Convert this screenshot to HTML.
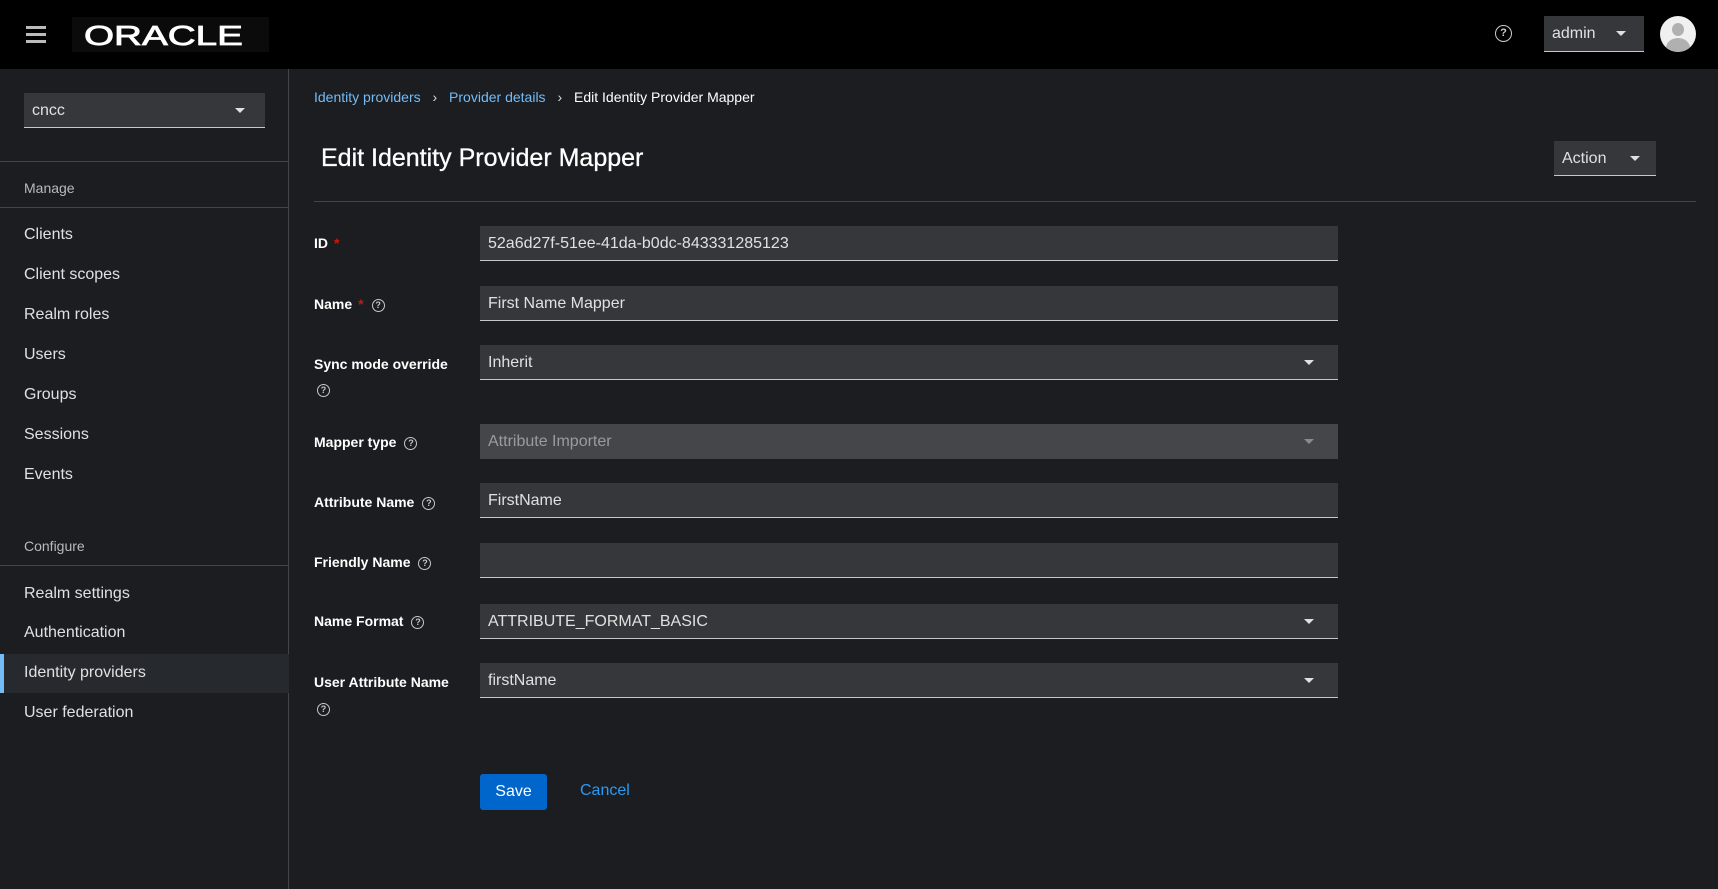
<!DOCTYPE html>
<html><head><meta charset="utf-8"><style>
*{box-sizing:border-box;margin:0;padding:0}
body{width:1718px;height:889px;overflow:hidden;background:#1b1d21;font-family:"Liberation Sans",sans-serif;color:#e0e0e0;position:relative}
.hdr{position:absolute;left:0;top:0;width:1718px;height:69px;background:#000}
.abs{position:absolute}
.side{position:absolute;left:0;top:69px;width:289px;height:820px;background:#1b1d21;border-right:1px solid #444548}
.nav{position:absolute;left:24px;font-size:16px;color:#e0e0e0}
.sec{position:absolute;left:24px;font-size:14px;color:#b8bbbe}
.hr{position:absolute;height:1px;background:#444548}
.lbl{position:absolute;left:314px;font-size:14px;font-weight:bold;color:#fff}
.req{color:#c9190b;margin-left:6px}
.inp{position:absolute;left:480px;width:858px;height:35px;background:#36373b;border-bottom:1px solid #c7c7c7;font-size:16px;color:#e0e0e0;padding:9px 8px}
.caret{position:absolute;right:24px;top:15px;width:0;height:0;border-left:5px solid transparent;border-right:5px solid transparent;border-top:5px solid #e0e0e0}
.q{display:inline-block;width:13px;height:13px;border:1.5px solid #c7c7c7;border-radius:50%;font-size:9px;line-height:10px;text-align:center;color:#c7c7c7;font-weight:bold;vertical-align:middle;margin-left:8px}
</style></head><body>
<div class="hdr">
 <div class="abs" style="left:26px;top:26px;width:20px;height:3px;background:#bbb"></div>
 <div class="abs" style="left:26px;top:33px;width:20px;height:3px;background:#bbb"></div>
 <div class="abs" style="left:26px;top:40px;width:20px;height:3px;background:#bbb"></div>
 <div class="abs" style="left:72px;top:17px;width:197px;height:35px;background:#0b0b0b"></div>
 <div class="abs" style="left:84px;top:22px;font-size:28px;font-weight:normal;color:#fff;transform:scaleX(1.38);transform-origin:left;line-height:28px;-webkit-text-stroke:0.8px #fff">ORACLE</div>
 <div class="abs" style="left:1495px;top:25px;width:17px;height:17px;border:1.5px solid #ccc;border-radius:50%;font-size:11px;line-height:14px;text-align:center;color:#ccc;font-weight:bold">?</div>
 <div class="abs" style="left:1544px;top:16px;width:100px;height:36px;background:#36373b;border-bottom:1px solid #c7c7c7;font-size:16px;padding:9px 8px;color:#e0e0e0">admin<span class="caret" style="right:18px;top:15px"></span></div>
 <div class="abs" style="left:1660px;top:16px;width:36px;height:36px;border-radius:50%;background:#f0f0f0;overflow:hidden">
  <div class="abs" style="left:12px;top:7px;width:12px;height:13px;border-radius:50%;background:#b0b0b0"></div>
  <div class="abs" style="left:6px;top:22px;width:24px;height:20px;border-radius:50% 50% 0 0;background:#b0b0b0"></div>
 </div>
</div>
<div class="side">
 <div class="abs" style="left:24px;top:24px;width:241px;height:35px;background:#36373b;border-bottom:1px solid #c7c7c7;font-size:16px;padding:9px 8px">cncc<span class="caret" style="right:20px;top:15px"></span></div>
</div>
<div class="hr" style="left:0;top:161px;width:289px"></div>
<div class="sec" style="top:180px">Manage</div>
<div class="hr" style="left:0;top:207px;width:289px"></div>
<div class="nav" style="top:226px">Clients</div>
<div class="nav" style="top:266px">Client scopes</div>
<div class="nav" style="top:306px">Realm roles</div>
<div class="nav" style="top:346px">Users</div>
<div class="nav" style="top:386px">Groups</div>
<div class="nav" style="top:426px">Sessions</div>
<div class="nav" style="top:466px">Events</div>
<div class="sec" style="top:538px">Configure</div>
<div class="hr" style="left:0;top:565px;width:289px"></div>
<div class="nav" style="top:585px">Realm settings</div>
<div class="nav" style="top:624px">Authentication</div>
<div class="abs" style="left:0;top:654px;width:289px;height:39px;background:#26292d;border-left:4px solid #73bcf7"></div>
<div class="nav" style="top:664px">Identity providers</div>
<div class="nav" style="top:704px">User federation</div>

<div class="abs" style="left:314px;top:89px;font-size:14px;color:#73bcf7">Identity providers <span style="color:#ddd;margin:0 8px">›</span> Provider details <span style="color:#ddd;margin:0 8px">›</span> <span style="color:#fff">Edit Identity Provider Mapper</span></div>
<div class="abs" style="left:321px;top:144px;font-size:25px;color:#fff;-webkit-text-stroke:0.3px #fff">Edit Identity Provider Mapper</div>
<div class="abs" style="left:1554px;top:141px;width:102px;height:35px;background:#36373b;border-bottom:1px solid #c7c7c7;font-size:16px;padding:9px 8px;color:#e0e0e0">Action<span class="caret" style="right:16px;top:15px"></span></div>
<div class="hr" style="left:314px;top:201px;width:1382px"></div>

<div class="lbl" style="top:235px">ID<span class="req">*</span></div>
<div class="inp" style="top:226px">52a6d27f-51ee-41da-b0dc-843331285123</div>
<div class="lbl" style="top:296px">Name<span class="req">*</span><span class="q">?</span></div>
<div class="inp" style="top:286px">First Name Mapper</div>
<div class="lbl" style="top:356px">Sync mode override</div>
<div class="lbl" style="top:381px"><span class="q" style="margin-left:3px">?</span></div>
<div class="inp" style="top:345px">Inherit<span class="caret"></span></div>
<div class="lbl" style="top:434px">Mapper type<span class="q">?</span></div>
<div class="inp" style="top:424px;background:#45464a;border-bottom:none;color:#9a9b9d">Attribute Importer<span class="caret" style="border-top-color:#8a8b8d"></span></div>
<div class="lbl" style="top:494px">Attribute Name<span class="q">?</span></div>
<div class="inp" style="top:483px">FirstName</div>
<div class="lbl" style="top:554px">Friendly Name<span class="q">?</span></div>
<div class="inp" style="top:543px"></div>
<div class="lbl" style="top:613px">Name Format<span class="q">?</span></div>
<div class="inp" style="top:604px">ATTRIBUTE_FORMAT_BASIC<span class="caret"></span></div>
<div class="lbl" style="top:674px">User Attribute Name</div>
<div class="lbl" style="top:700px"><span class="q" style="margin-left:3px">?</span></div>
<div class="inp" style="top:663px">firstName<span class="caret"></span></div>

<div class="abs" style="left:480px;top:774px;width:67px;height:36px;background:#0066cc;border-radius:3px;color:#fff;font-size:16px;text-align:center;line-height:36px">Save</div>
<div class="abs" style="left:580px;top:782px;font-size:16px;color:#2b9af3">Cancel</div>
</body></html>
